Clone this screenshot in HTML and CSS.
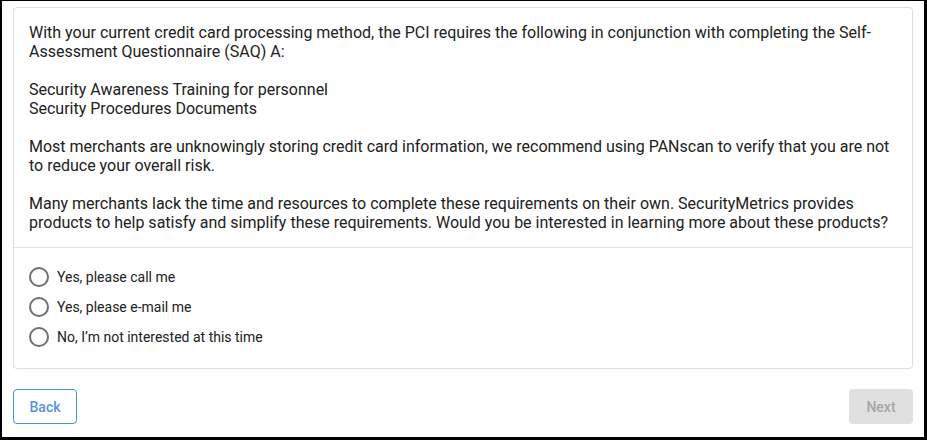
FILE: index.html
```html
<!DOCTYPE html>
<html lang="en">
<head>
    <meta charset="UTF-8">
    <meta name="viewport" content="width=device-width, initial-scale=1.0">
    <title>SAQ Requirements</title>
    <link rel="stylesheet" href="styles.css">
</head>
<body>
    <div class="frame">
        <div class="card">
            <div class="card-body">
                <p>With your current credit card processing method, the PCI requires the following in conjunction with completing the Self-Assessment Questionnaire (SAQ) A:</p>
                <p>Security Awareness Training for personnel<br>Security Procedures Documents</p>
                <p>Most merchants are unknowingly storing credit card information, we recommend using PANscan to verify that you are not to reduce your overall risk.</p>
                <p>Many merchants lack the time and resources to complete these requirements on their own. SecurityMetrics provides products to help satisfy and simplify these requirements. Would you be interested in learning more about these products?</p>
            </div>
            <div class="card-options">
                <label class="option"><input type="radio" name="interest" value="call"> Yes, please call me</label>
                <label class="option"><input type="radio" name="interest" value="email"> Yes, please e-mail me</label>
                <label class="option"><input type="radio" name="interest" value="no"> No, I’m not interested at this time</label>
            </div>
        </div>

        <div class="actions">
            <button class="btn btn-back">Back</button>
            <button class="btn btn-next" disabled>Next</button>
        </div>
    </div>
</body>
</html>
```

FILE: styles.css
```css
html, body {
    margin: 0;
    padding: 0;
}

body {
    font-family: Roboto, "Liberation Sans", sans-serif;
    color: #212121;
    background: #fff;
}

.frame {
    box-sizing: border-box;
    height: 440px;
    border: 2px solid #000;
    border-top-width: 1px;
    border-right-width: 3px;
    border-bottom-width: 3px;
    padding: 6px 11px 13px 11px;
    display: flex;
    flex-direction: column;
}

.card {
    border: 1px solid #dedede;
    border-radius: 4px;
    background: #fff;
}

.card-body {
    padding: 15px 15px 15px;
    border-bottom: 1px solid #e2e2e2;
    font-size: 16px;
    line-height: 19px;
}

.card-body p {
    margin: 0 0 19px;
}

.card-body p:last-child {
    margin-bottom: 0;
}

.card-options {
    padding: 14px 15px 16px;
    display: flex;
    flex-direction: column;
}

.option {
    display: flex;
    align-items: center;
    gap: 8px;
    height: 30px;
    font-size: 14px;
    color: #212121;
    cursor: pointer;
}

.option input {
    appearance: none;
    -webkit-appearance: none;
    box-sizing: border-box;
    width: 20px;
    height: 20px;
    margin: 0;
    border: 2px solid #6f6f6f;
    border-radius: 50%;
    background: #fff;
    flex: none;
}

.option input:checked {
    background: radial-gradient(circle, #2f80ed 0 4px, #fff 5px);
}

.actions {
    margin-top: 20px;
    display: flex;
    justify-content: space-between;
}

.btn {
    box-sizing: border-box;
    width: 64px;
    height: 35px;
    border-radius: 4px;
    font-family: Roboto, "Liberation Sans", sans-serif;
    font-size: 14px;
    font-weight: 500;
    cursor: pointer;
}

.btn-back {
    background: #fff;
    border: 1px solid #4a90e2;
    color: #5b93e0;
}

.btn-next {
    background: #e0e0e0;
    border: none;
    color: #a6a6a6;
    cursor: default;
}
```
